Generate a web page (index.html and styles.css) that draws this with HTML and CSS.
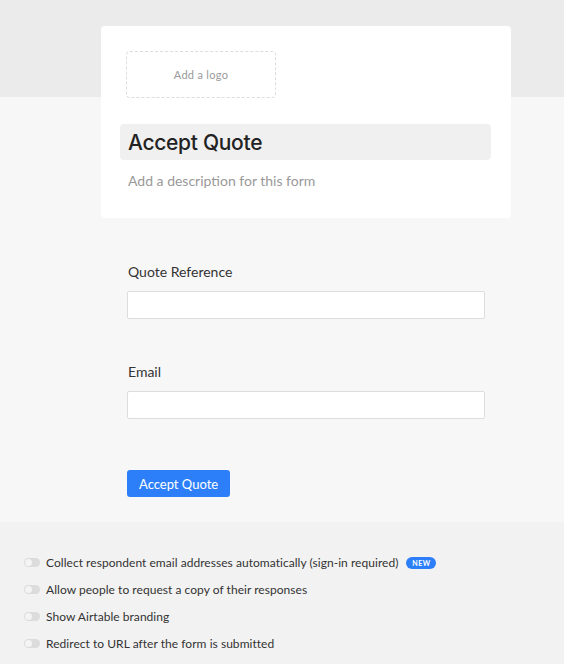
FILE: index.html
```html
<!DOCTYPE html>
<html lang="en">
<head>
    <meta charset="UTF-8">
    <meta name="viewport" content="width=device-width, initial-scale=1.0">
    <title>Accept Quote - Form</title>
    <link rel="stylesheet" href="styles.css">
</head>
<body>
    <div class="form-area">
        <!-- ヘッダーカード -->
        <div class="form-card">
            <div class="logo-drop">Add a logo</div>
            <div class="form-title">Accept Quote</div>
            <div class="form-desc">Add a description for this form</div>
        </div>

        <!-- フィールド -->
        <div class="fields">
            <div class="field">
                <label class="field-label">Quote Reference</label>
                <input class="field-input" type="text">
            </div>
            <div class="field">
                <label class="field-label">Email</label>
                <input class="field-input" type="text">
            </div>
            <button class="submit-button">Accept Quote</button>
        </div>
    </div>

    <!-- 設定 -->
    <div class="settings">
        <div class="setting">
            <span class="toggle"></span>
            <span>Collect respondent email addresses automatically (sign-in required)</span>
            <span class="badge">NEW</span>
        </div>
        <div class="setting">
            <span class="toggle"></span>
            <span>Allow people to request a copy of their responses</span>
        </div>
        <div class="setting">
            <span class="toggle"></span>
            <span>Show Airtable branding</span>
        </div>
        <div class="setting">
            <span class="toggle"></span>
            <span>Redirect to URL after the form is submitted</span>
        </div>
    </div>
</body>
</html>
```
FILE: styles.css
```css
/* スタイル */
body {
    font-family: Lato, "Liberation Sans", sans-serif;
    margin: 0;
    padding: 0;
    color: #333;
    background-color: #f2f2f2;
}
.form-area {
    height: 522px;
    box-sizing: border-box;
    padding-top: 26px;
    background: linear-gradient(#ebebeb 97px, #f7f7f7 97px);
}
.form-card {
    width: 410px;
    margin-left: 101px;
    box-sizing: border-box;
    padding: 25px 20px 0 19px;
    height: 192px;
    background-color: white;
    border-radius: 4px;
}
.logo-drop {
    width: 150px;
    height: 47px;
    margin-left: 6px;
    box-sizing: border-box;
    border: 1px dashed #ddd;
    border-radius: 4px;
    display: flex;
    align-items: center;
    justify-content: center;
    font-size: 11px;
    color: #999;
    letter-spacing: 0.3px;
}
.form-title {
    margin-top: 26px;
    height: 36px;
    box-sizing: border-box;
    padding-top: 2px;
    line-height: 34px;
    padding-left: 8px;
    background-color: #f0f0f0;
    border-radius: 4px;
    font-family: Inter, sans-serif;
    font-size: 21px;
    font-weight: 500;
    color: #222;
    letter-spacing: -0.3px;
}
.form-desc {
    margin-top: 11px;
    padding-left: 8px;
    font-size: 14px;
    line-height: 20px;
    color: #999;
}
.fields {
    margin-left: 127px;
    width: 358px;
    padding-top: 44px;
}
.field {
    margin-bottom: 43px;
}
.field-label {
    display: block;
    padding-left: 1px;
    font-size: 14px;
    line-height: 20px;
    color: #333;
    margin-bottom: 9px;
}
.field-input {
    display: block;
    width: 100%;
    height: 28px;
    box-sizing: border-box;
    margin: 0;
    border: 1px solid #ddd;
    border-radius: 2px;
    background-color: white;
}
.submit-button {
    margin-top: 8px;
    background-color: #2d7ff9;
    color: white;
    border: none;
    border-radius: 3px;
    height: 27px;
    padding: 0 12px;
    font-family: Lato, sans-serif;
    font-size: 13px;
    cursor: pointer;
}
.settings {
    padding: 27px 0 0 24px;
}
.setting {
    display: flex;
    align-items: center;
    height: 27px;
    font-size: 12px;
    letter-spacing: 0.04px;
    color: #333;
}
.toggle {
    width: 16px;
    height: 9px;
    border-radius: 5px;
    background-color: #dcdcdc;
    margin-right: 6px;
    position: relative;
}
.toggle::after {
    content: "";
    position: absolute;
    left: 1px;
    top: 1px;
    width: 7px;
    height: 7px;
    border-radius: 50%;
    background-color: #f4f4f4;
}
.badge {
    margin-left: 8px;
    background-color: #2d7ff9;
    color: white;
    font-size: 7px;
    font-weight: bold;
    letter-spacing: 0.5px;
    width: 30px;
    text-align: center;
    height: 12px;
    line-height: 12px;
    border-radius: 6px;
}
```
